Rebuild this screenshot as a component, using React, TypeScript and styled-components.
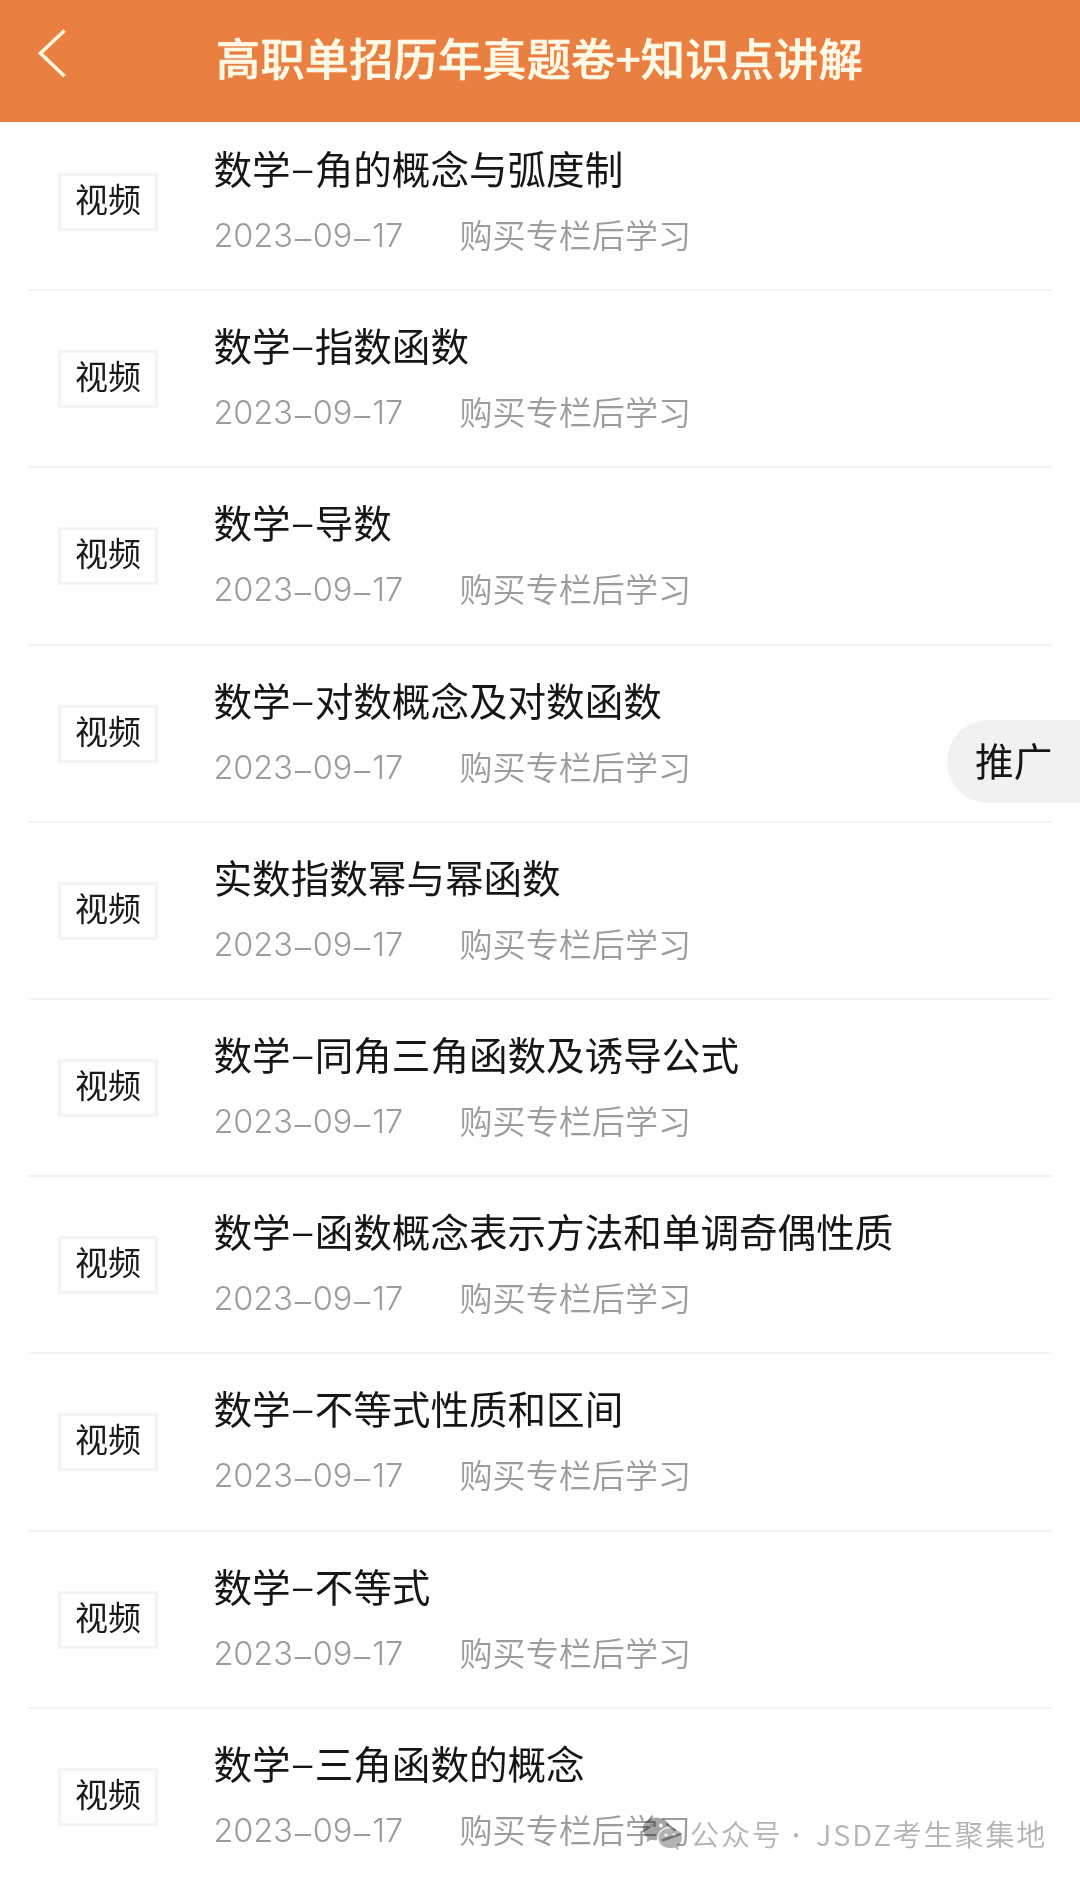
import React from "react";
import styled, { createGlobalStyle } from "styled-components";

const GlobalStyle = createGlobalStyle`
  * { box-sizing: border-box; }
  body { margin: 0; background: #fefefe; }
`;

const cjk = `"Noto Sans CJK SC", sans-serif`;

const Page = styled.div`
  position: relative;
  width: 1080px;
  height: 1878px;
  overflow: hidden;
  background: #fefefe;
  font-family: ${cjk};
  white-space: nowrap;
`;

const Header = styled.header`
  position: relative;
  z-index: 1;
  display: grid;
  grid-template-columns: 216px 1fr;
  height: 121.5px;
  background: #ea7f42;
`;

const BackButton = styled.button`
  display: flex;
  padding: 27px 0 0 36px;
  border: 0;
  background: none;
`;

const Heading = styled.h1`
  margin: 0;
  padding-top: 25px;
  color: #fff9e6;
  font-size: 44.2px;
  font-weight: 500;
  letter-spacing: 0.2px;
  line-height: 64px;
  -webkit-text-stroke: 0.6px #fff9e6;
`;

const List = styled.ul`
  margin: -7.5px 28px 0;
  padding: 0;
  list-style: none;
`;

const Row = styled.li`
  display: flex;
  align-items: flex-start;
  height: 177.2px;
  padding: 24px 0 0 30px;
  border-bottom: 2px solid #f2f2f2;
`;

const Tag = styled.span`
  flex: none;
  width: 100px;
  height: 58px;
  margin: 35px 55.5px 0 0;
  border: 3px solid #f3f3f3;
  color: #1b1b1b;
  font-size: 33px;
  line-height: 44px;
  text-align: center;
`;

const Body = styled.div`
  display: flex;
  flex-direction: column;
`;

const Title = styled.div`
  height: 58px;
  color: #161616;
  font-size: 38.6px;
  line-height: 58px;
`;

const Dash = styled.span<{ $width: number; $drop: number }>`
  position: relative;
  top: ${(p) => p.$drop}px;
  display: inline-block;
  width: ${(p) => p.$width}px;
  font-family: Inter, ${cjk};
  font-weight: 300;
  line-height: 1;
  letter-spacing: 0;
  text-align: center;
`;

const Meta = styled.div`
  display: flex;
  margin-top: 14px;
  color: #9c9c9c;
  font-size: 33.1px;
  font-weight: 350;
  line-height: 48px;
`;

const DateText = styled.span`
  width: 246px;
  padding-top: 2px;
  font-family: Inter, ${cjk};
  font-size: 32.5px;
  font-weight: 350;
  letter-spacing: -0.1px;
`;

const Promo = styled.button`
  position: absolute;
  top: 720px;
  right: 0;
  width: 133px;
  height: 83px;
  padding: 0 0 5px 28px;
  border: 0;
  border-radius: 42px 0 0 42px;
  background: #f1f1f1;
  color: #161616;
  font-family: ${cjk};
  font-size: 38.7px;
  line-height: 56px;
  text-align: left;
`;

const Watermark = styled.div`
  position: absolute;
  top: 1811px;
  left: 642px;
  display: flex;
  align-items: center;
  height: 46px;
  color: #b4b4b4;
  font-size: 29px;
  font-weight: 350;
  letter-spacing: 1.9px;
`;

const WatermarkName = styled.span<{ $width: number }>`
  width: ${(p) => p.$width}px;
  margin-top: -2px;
`;

const Separator = styled.span`
  width: 34px;
  margin-top: -2px;
  padding-left: 3px;
  font-size: 22px;
`;

const WechatMark = styled.svg`
  flex: none;
  margin-right: 7px;
  mix-blend-mode: multiply;
`;

const titles = [
  "数学–角的概念与弧度制",
  "数学–指数函数",
  "数学–导数",
  "数学–对数概念及对数函数",
  "实数指数幂与幂函数",
  "数学–同角三角函数及诱导公式",
  "数学–函数概念表示方法和单调奇偶性质",
  "数学–不等式性质和区间",
  "数学–不等式",
  "数学–三角函数的概念",
];

function Dashed({ text, width, drop }: { text: string; width: number; drop: number }) {
  return (
    <>
      {text.split("–").map((part, i) => (
        <React.Fragment key={i}>
          {i > 0 && <Dash $width={width} $drop={drop}>–</Dash>}
          {part}
        </React.Fragment>
      ))}
    </>
  );
}

function Lesson({ title }: { title: string }) {
  return (
    <Row>
      <Tag>视频</Tag>
      <Body>
        <Title>
          <Dashed text={title} width={24} drop={0} />
        </Title>
        <Meta>
          <DateText>
            <Dashed text="2023–09–17" width={20} drop={3} />
          </DateText>
          <span>购买专栏后学习</span>
        </Meta>
      </Body>
    </Row>
  );
}

export default function App() {
  return (
    <Page>
      <GlobalStyle />
      <Header>
        <BackButton aria-label="返回">
          <svg width="32" height="53" viewBox="0 0 32 53" fill="none" stroke="#fff6dc" strokeWidth="3.6">
            <path d="M28.500 3.500 L4.500 26.300 L28.500 49.200" />
          </svg>
        </BackButton>
        <Heading>高职单招历年真题卷+知识点讲解</Heading>
      </Header>
      <List>
        {titles.map((title) => (
          <Lesson key={title} title={title} />
        ))}
      </List>
      <Promo>推广</Promo>
      <Watermark>
        <WechatMark width="41" height="34" viewBox="0 0 41 34">
          <path
            fill="#a6a6a6"
            d="M14 .5C6.500.500 1 5.500 1 11.800c0 3.600 1.800 6.700 4.600 8.800L4.300 25l5-2.300c1.500.4 3 .6 4.700.6l1-.1C14.500 16 20 10 28 9.800 26.500 4.500 21 .5 14 .5Z"
          />
          <path
            fill="#b4b4b4"
            d="M28 11C21.400 11 16.300 15.500 16.300 21S21.400 31 28 31c1.400 0 2.800-.2 4-.6l5 2.600-1.200-4c2.600-1.900 4.200-4.700 4.200-8C40 15.500 34.700 11 28 11Z"
          />
          <g fill="#fafafa">
            <circle cx="9.500" cy="8" r="1.500" fill="#8c8c8c" />
            <circle cx="18.800" cy="8.400" r="2" />
            <circle cx="24" cy="18" r="1.600" />
            <circle cx="32" cy="18" r="1.400" />
          </g>
        </WechatMark>
        <WatermarkName $width={92}>公众号</WatermarkName>
        <Separator>·</Separator>
        <WatermarkName $width={230}>JSDZ考生聚集地</WatermarkName>
      </Watermark>
    </Page>
  );
}
